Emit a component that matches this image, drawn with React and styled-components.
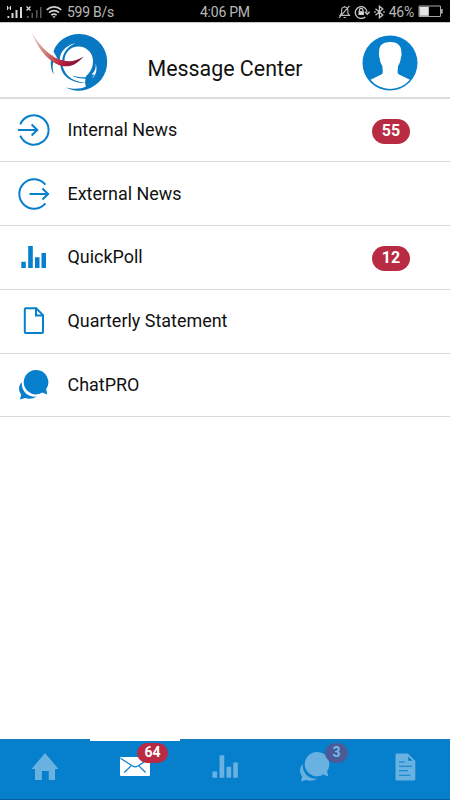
import React from "react";
import styled, { createGlobalStyle } from "styled-components";

const BLUE = "#067fcd";
const RED = "#b82b43";

const GlobalStyle = createGlobalStyle`
  * { box-sizing: border-box; }
  body { margin: 0; background: #fff; font-family: Roboto, sans-serif; }
  svg { display: block; flex: none; }
`;

const Screen = styled.div`
  width: 450px;
  height: 800px;
  display: flex;
  flex-direction: column;
  overflow: hidden;
  background: #fff;
`;

const StatusBar = styled.header`
  height: 22px;
  flex: none;
  display: grid;
  grid-template-columns: 1fr 50px 1fr;
  align-items: center;
  background: #000;
  color: #b9b9b9;
  font-size: 14px;
  line-height: 22px;
  white-space: nowrap;
`;

const StatusGroup = styled.div`
  display: flex;
  align-items: center;
  height: 22px;
  gap: ${(p) => p.$gap || 0}px;
  justify-content: ${(p) => (p.$end ? "flex-end" : "flex-start")};
  padding: ${(p) => (p.$end ? "0 6px 0 0" : "0 0 0 6px")};
`;

const StatusText = styled.span`
  padding-top: 1px;
  font-size: 14px;
  letter-spacing: -0.25px;
  margin: ${(p) => p.$margin || 0};
`;

const TitleBar = styled.div`
  height: 76.6px;
  flex: none;
  display: grid;
  grid-template-columns: 120px 210px 120px;
  border-top: 1px solid #c9c9c9;
  border-bottom: 2px solid #dcdcdc;
`;

const LogoSlot = styled.div`
  padding: 5px 0 0 28px;
`;

const Title = styled.h1`
  margin: 0;
  padding-top: 31px;
  text-align: center;
  font-size: 21.4px;
  line-height: 30px;
  font-weight: 400;
  color: #111;
`;

const AvatarSlot = styled.div`
  padding: 12px 0 0 32px;
`;

const List = styled.ul`
  list-style: none;
  margin: 0;
  padding: 0;
  flex: 1;
`;

const Row = styled.li`
  height: 63.75px;
  display: flex;
  align-items: center;
  padding: 0 40px 0 17px;
  border-bottom: 1.5px solid #d9d9d9;
`;

const RowLabel = styled.span`
  flex: 1;
  margin-left: 16.5px;
  font-size: 17.95px;
  line-height: 24px;
  color: #111;
`;

const Badge = styled.span`
  width: 38px;
  height: 25px;
  margin-top: 3px;
  border-radius: 13px;
  background: ${RED};
  color: #fff;
  font-size: 16px;
  line-height: 23px;
  font-weight: 700;
  text-align: center;
`;

const TabBar = styled.nav`
  height: 61px;
  flex: none;
  display: grid;
  grid-template-columns: repeat(5, 90px);
  background: ${BLUE};
  border-bottom: 1px solid #055f9c;
`;

const Tab = styled.div`
  position: relative;
  display: flex;
  align-items: flex-start;
  justify-content: center;
  border-top: ${(p) => (p.$active ? "2px solid #fff" : "1px solid #1b79b8")};
  padding-top: ${(p) => p.$top}px;
  color: ${(p) => (p.$active ? "#fff" : "#68b1e0")};
`;

const TabBadge = styled.span`
  position: absolute;
  left: ${(p) => p.$left}px;
  top: ${(p) => p.$top}px;
  width: ${(p) => p.$width}px;
  height: 20px;
  border-radius: 11px;
  background: ${(p) => (p.$dim ? "rgba(86, 85, 142, 0.86)" : RED)};
  color: ${(p) => (p.$dim ? "#79bce8" : "#fff")};
  font-size: 14px;
  line-height: 19px;
  font-weight: 700;
  text-align: center;
`;

const SignalIcon = () => (
  <svg width="37" height="16" viewBox="0 0 37 16">
    <g fill="#d8d8d8">
      <path d="M1 2h1v1.5h2V2h1v4H4V4.4H2V6H1z" />
      <path d="M1.5 12h1.8v2H1.5zM5.5 9h2v5h-2zM9.5 6h2v8h-2zM14 3h2v11h-2z" />
    </g>
    <path d="M20.5 2.5l4 4m0-4l-4 4" stroke="#d8d8d8" strokeWidth="1.2" />
    <path d="M21 12h1.8v2H21zM25.5 9h1.5v5h-1.5zM30 6h1.5v8H30zM34 3h1.5v11H34z" fill="#5b5b5b" />
  </svg>
);

const WifiIcon = () => (
  <svg width="16" height="14" viewBox="0 0 16 14" fill="none" stroke="#d0d0d0" strokeWidth="1.7">
    <path d="M.7 4.8C4.8 1 11.2 1 15.3 4.8M3 7.6c2.9-2.6 7.1-2.6 10 0M5.3 10.2c1.6-1.4 3.8-1.4 5.4 0" />
    <path d="M6.3 11.3h3.4L8 13.3z" fill="#d0d0d0" stroke="none" />
  </svg>
);

const MutedBellIcon = () => (
  <svg width="13" height="14" viewBox="0 0 13 14" fill="none" stroke="#bdbdbd" strokeWidth="1.1">
    <path d="M2 10.4h9.5L9.8 8V5c0-4-6.2-4-6.2 0v3L2 10.4zM5.5 12.5h2.3M11.5.8L1 12.8M6.6 1V2" />
  </svg>
);

const LockIcon = () => (
  <svg width="17" height="14" viewBox="0 0 17 14" fill="none" stroke="#c9c9c9" strokeWidth="1.3">
    <path d="M11.2 11.9A5.9 5.9 0 1 1 13.1 7.2M10.9 6.8l2.3 2.5 2.4-2.5" />
    <path d="M4.5 6.2h5.4V10H4.5z" fill="#d4d4d4" stroke="none" />
    <path d="M5.5 6.5V5c0-2.1 3.4-2.1 3.4 0v1.5" />
  </svg>
);

const BluetoothIcon = () => (
  <svg width="11" height="14" viewBox="0 0 11 14" fill="none" stroke="#c4c4c4" strokeWidth="1.3">
    <path d="M1.5 3.8l7.3 6.2-3.4 2.8V1.2L8.8 4l-7.3 6.2M.3 7h1.5M9.2 7h1.5" />
  </svg>
);

const BatteryIcon = () => (
  <svg width="26" height="13" viewBox="0 0 26 13">
    <path d="M1 1h21.5v10.5H1z" fill="none" stroke="#a9a9a9" strokeWidth="1" />
    <path d="M1.5 1.8h9.3v9H1.5z" fill="#e4e4e4" />
    <path d="M23 4h1.7v4.5H23z" fill="#a9a9a9" />
  </svg>
);

const Logo = () => (
  <svg width="84" height="66" viewBox="0 0 84 66">
    <defs>
      <linearGradient id="swoosh" x1="4" y1="6" x2="55" y2="35" gradientUnits="userSpaceOnUse">
        <stop offset="0" stopColor="#f4d8d1" />
        <stop offset="0.35" stopColor="#cf7f79" />
        <stop offset="0.7" stopColor="#b51f3d" />
        <stop offset="1" stopColor="#6e0d31" />
      </linearGradient>
    </defs>
    <path
      d="M25.5 23.5C29 12.5 39.5 6 51 6c16 0 28.2 12.3 28.2 28C79.2 47 71 57.5 58.5 61.5 50.5 63.8 43 62.5 38 59.5c8 2 15 1.6 20-1-1.2-3-1.2-7 .3-10.8 4-3.3 6.7-8 6.7-14.7C65 24.7 58.5 18.5 50.5 18.5S36.5 24.7 36.5 32.5L33 37z"
      fill="#0878c3"
    />
    <path d="M47.5 15.2C38 16.8 32 24 31.7 31.5c-.1 2 .1 3.5.5 5l2-3C34.3 26 38.5 18.8 47.5 15.2z" fill="#fff" />
    <path d="M67.6 35.5c.7 4.6-.8 8.3-4.1 11l2.9-.1-2.6 4C68 47.8 69.7 41.4 67.6 35.5z" fill="#fff" />
    <path
      d="M24.3 27c-2.5 6.3-1.8 14.5 1.5 19.6-1.6-6.1-1.4-11 .2-15zM32.4 36c.1 9 6.5 16.2 17.6 18.4 3 .6 6 .8 8.5.6-10.3-1-21.8-5-24.3-19zM43.5 47.5c4 2.2 9 3.3 15 3.3v-1.6c-5.5.2-10.3-.3-15-1.7z"
      fill="#0878c3"
    />
    <path d="M4 5c9.4 15.2 20 25.6 32.5 27.8 7.7 1.2 13.2-1 19-4.4-5.5 6.7-12.4 10.9-20.4 9.8C22.6 36 10.2 22 4 5z" fill="url(#swoosh)" />
  </svg>
);

const Avatar = () => (
  <svg width="56" height="56" viewBox="0 0 56 56">
    <circle cx="28" cy="28" r="27.5" fill={BLUE} />
    <path
      d="M8.5 44.7L19.3 39.6c1.6-.8 1.6-2.8 1.4-4.6l-.4-4c-1.5-2.5-2.4-5-2.7-8-1-2-.9-4.6-.4-6.5C16.8 10.5 21 7 28.2 7s11.2 3.5 11 9.5c.5 1.9.6 4.5-.4 6.5-.3 3-1.2 5.5-2.7 8l-.4 4c-.2 1.8-.2 3.8 1.4 4.6l10.8 5.1a25.6 25.6 0 0 1-39.4 0z"
      fill="#fff"
    />
  </svg>
);

const InternalIcon = () => (
  <svg width="34" height="34" viewBox="0 0 34 34" fill="none" stroke={BLUE} strokeWidth="2">
    <path d="M3.3 11.4a14.7 14.7 0 1 1 0 11.2M1 17h19M14.6 11.5l5.7 5.5-5.7 5.5" />
  </svg>
);

const ExternalIcon = () => (
  <svg width="34" height="34" viewBox="0 0 34 34" fill="none" stroke={BLUE} strokeWidth="2">
    <path d="M28.4 7.7a14.7 14.7 0 1 0 0 18.6M12.5 17h18.8M25.4 11.5l5.7 5.5-5.7 5.5" />
  </svg>
);

const PollIcon = ({ size = 34, color = "currentColor" }) => (
  <svg width={size} height={size} viewBox="0 0 34 34" fill={color}>
    <path d="M4.3 21.8h4.5V28H4.3zM11.2 6h4.6v22h-4.6zM18 17.2h4.5V28H18zM24.5 13H29v15h-4.5z" />
  </svg>
);

const PageIcon = () => (
  <svg width="34" height="34" viewBox="0 0 34 34" fill="none" stroke={BLUE} strokeWidth="2">
    <path d="M8.8 4.3h10.4l6.8 6.8v17a1 1 0 0 1-1 1H8.8a1 1 0 0 1-1-1V5.3a1 1 0 0 1 1-1zM19 4.5v7h7" />
  </svg>
);

const ChatIcon = ({ color = "currentColor" }) => (
  <svg width="34" height="34" viewBox="0 0 34 34" fill={color}>
    <path d="M19 2A12.2 12.2 0 0 1 29.2 21L30.2 26.4 25.3 24.6A12.2 12.2 0 1 1 19 2z" />
    <path d="M4.7 14.2C4.2 23.3 10.8 29.3 19.7 28.6 16 31.1 11.6 31.4 8.1 30.1L3 31.5l1.2-4.9C1.2 22.5 1.4 17.5 4.7 14.2z" />
  </svg>
);

const HomeIcon = () => (
  <svg width="28" height="28" viewBox="0 0 28 28" fill="currentColor">
    <path d="M14 0L27.5 16H24v11h-6.3v-9h-6.8v9H4V16H.5z" />
  </svg>
);

const MailIcon = () => (
  <svg width="30" height="19" viewBox="0 0 30 19">
    <rect width="30" height="19" rx="1" fill="currentColor" />
    <path d="M.5 1.2L12.5 9c2 1.2 3.3 1.2 5.3 0l11.7-7.5M11.3 8.6L4.3 15.5M18.6 8.6l7 6.9" fill="none" stroke={BLUE} strokeWidth="1.2" />
  </svg>
);

const DocumentIcon = () => (
  <svg width="21" height="28" viewBox="0 0 21 28">
    <path d="M1.5.5H13L20.3 8v18.5a1 1 0 0 1-1 1H1.5a1 1 0 0 1-1-1v-25a1 1 0 0 1 1-1z" fill="currentColor" />
    <path d="M13.2 3.5v4.2h4.4z" fill={BLUE} />
    <path d="M4 9h5.7M4 13.3h13.3M4 17.8h9M4 22.2h11.2" stroke={BLUE} strokeWidth="1.1" />
  </svg>
);

const messages = [
  { label: "Internal News", icon: <InternalIcon />, count: 55 },
  { label: "External News", icon: <ExternalIcon /> },
  { label: "QuickPoll", icon: <PollIcon color={BLUE} />, count: 12 },
  { label: "Quarterly Statement", icon: <PageIcon /> },
  { label: "ChatPRO", icon: <ChatIcon color={BLUE} /> },
];

export default function App() {
  return (
    <Screen>
      <GlobalStyle />
      <StatusBar>
        <StatusGroup $gap={3}>
          <SignalIcon />
          <WifiIcon />
          <StatusText $margin="0 0 0 2px">599 B/s</StatusText>
        </StatusGroup>
        <StatusText>4:06 PM</StatusText>
        <StatusGroup $gap={3} $end>
          <MutedBellIcon />
          <LockIcon />
          <BluetoothIcon />
          <StatusText $margin="0 1px 0 1px">46%</StatusText>
          <BatteryIcon />
        </StatusGroup>
      </StatusBar>
      <TitleBar>
        <LogoSlot><Logo /></LogoSlot>
        <Title>Message Center</Title>
        <AvatarSlot><Avatar /></AvatarSlot>
      </TitleBar>
      <List>
        {messages.map(({ label, icon, count }) => (
          <Row key={label}>
            {icon}
            <RowLabel>{label}</RowLabel>
            {count && <Badge>{count}</Badge>}
          </Row>
        ))}
      </List>
      <TabBar>
        <Tab $top={13}><HomeIcon /></Tab>
        <Tab $active $top={16}>
          <MailIcon />
          <TabBadge $left={47} $top={2} $width={31}>64</TabBadge>
        </Tab>
        <Tab $top={9}><PollIcon size={35} /></Tab>
        <Tab $top={10}>
          <ChatIcon />
          <TabBadge $left={55} $top={3} $width={23} $dim>3</TabBadge>
        </Tab>
        <Tab $top={13}><DocumentIcon /></Tab>
      </TabBar>
    </Screen>
  );
}
